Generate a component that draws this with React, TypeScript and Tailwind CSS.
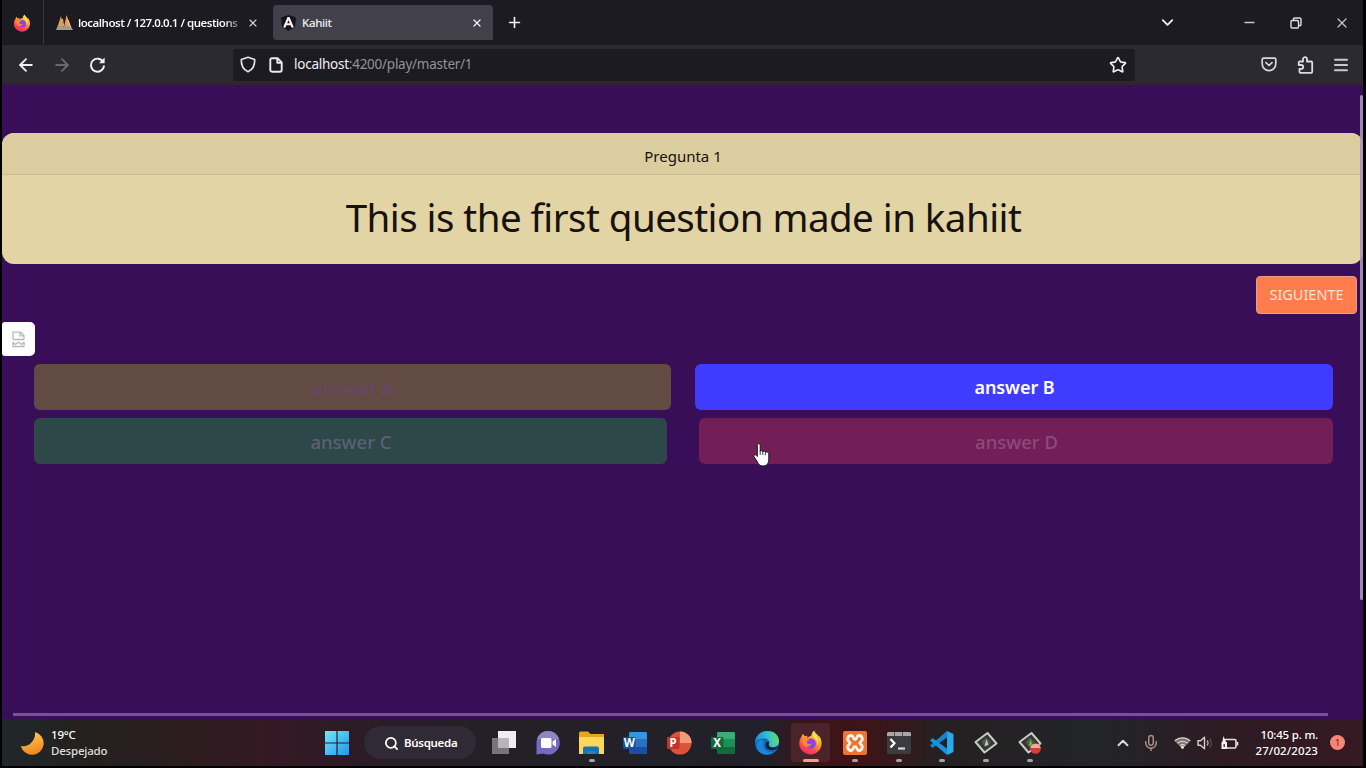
import React from 'react';
import { ArrowLeft, ArrowRight, ChevronDown, ChevronUp, Menu, Mic, Minus, Plus, Search, Star, X } from 'lucide-react';

const FirefoxIcon = ({ size }: { size: number }) => (
  <svg width={size} height={size} viewBox="0 0 24 24">
    <defs>
      <linearGradient id="fx" x1="0.8" y1="0" x2="0.3" y2="1">
        <stop offset="0" stopColor="#fff05a" />
        <stop offset="0.4" stopColor="#ffa52c" />
        <stop offset="0.75" stopColor="#ff4a48" />
        <stop offset="1" stopColor="#e8266e" />
      </linearGradient>
    </defs>
    <path d="M3 7 4.5 3.5 6.5 6 9 5.5 8.8 8C10 6 12 6 13 5c.3-2 1-3.500 2.500-4.500C16 3 19 4 20 6.500l.2-1C22 8 23 11 22.600 14 22 19.500 17.500 23.500 12 23.500S1.200 19 1.200 13C1.200 10.500 2 8.500 3 7Z" fill="url(#fx)" />
    <circle cx="12.200" cy="13" r="5" fill="#8a45e8" />
    <path d="M5 9c2-1.500 4.500-1 6 .8-2 .2-3 1.200-2.600 2.500.6 1.600 2.600 1.600 4.600.7-1 3-5 4-7.200 2C4.500 13.500 4 11 5 9Z" fill="#ff8a2c" />
    <path d="M15 3c4 3 6 7 4 12 0-3-1-6-4-7.500-1-1.500-.8-3 0-4.500Z" fill="#ffdc4a" />
  </svg>
);

const Pma = () => (
  <svg width="17" height="16" viewBox="0 0 17 16">
    <path d="M1.500 12 5 1l2.500 11Z" fill="#e9a143" />
    <path d="M8 12 10.500 0l4.500 12Z" fill="#f0a03c" />
    <path d="M0 15 2.500 9l2 3 1.500-3 2 3.500L10 9l2 3.500L13.500 9 17 15Z" fill="#a39c95" />
    <path d="M6.500 4 7.500 11M12 5l2.500 7" stroke="#ddd0bd" strokeWidth="1" />
  </svg>
);

const AngularIcon = () => (
  <svg width="15" height="16" viewBox="0 0 15 16">
    <path d="M7.500 0 15 2.500 14 12l-6.500 4L1 12 0 2.500Z" fill="#15141b" />
    <path d="M7.500 2.500 3.200 12.500M7.500 2.500l4.300 10M5 9.300h5" stroke="#f5f5f7" strokeWidth="2.100" fill="none" />
  </svg>
);

const Reload = () => (
  <svg width="17" height="17" viewBox="0 0 17 17" fill="none" stroke="#f0eff4" strokeWidth="1.900">
    <path d="M14.300 6.200A6.500 6.500 0 1 0 15 9.500" />
    <path d="M15.600 1.500v5.700H10Z" fill="#f0eff4" stroke="none" />
  </svg>
);

const ShieldIcon = () => (
  <svg width="16" height="17" viewBox="0 0 16 17" fill="none" stroke="#e4e3e9" strokeWidth="1.700" strokeLinejoin="round">
    <path d="M8 1.200 14.700 3.500c.2 5-1.200 9.700-6.700 12.300C2.500 13.200 1.100 8.500 1.300 3.500Z" />
  </svg>
);

const PageIcon = () => (
  <svg width="14" height="16" viewBox="0 0 14 16" fill="none" stroke="#ebeaf0" strokeWidth="1.900" strokeLinejoin="round">
    <path d="M3 1.200h5.500l4.200 4.200V13a1.700 1.700 0 0 1-1.700 1.700H3A1.700 1.700 0 0 1 1.300 13V2.900A1.700 1.700 0 0 1 3 1.200Z" />
    <path d="M8.300 1.500v4.300h4.200" />
  </svg>
);

const Pocket = () => (
  <svg width="16" height="15" viewBox="0 0 16 15" fill="none" stroke="#d8d6de" strokeWidth="1.700" strokeLinecap="round" strokeLinejoin="round">
    <path d="M2.500 1.200h11a1.300 1.300 0 0 1 1.300 1.300v4.300a6.800 6.800 0 0 1-13.600 0V2.500a1.300 1.300 0 0 1 1.300-1.300Z" />
    <path d="m5 5.700 3 2.800 3-2.800" />
  </svg>
);

const Puzzle = () => (
  <svg width="17" height="18" viewBox="0 0 17 18" fill="none" stroke="#dddbe3" strokeWidth="1.800" strokeLinejoin="round">
    <path d="M3 5.500h3V3.200a2 2 0 0 1 4 0v2.300h4.200a1 1 0 0 1 1 1v9.300a1 1 0 0 1-1 1H3.500a1 1 0 0 1-1-1v-3h1.800a1.900 1.900 0 0 0 0-3.800H1.700V6.500A1 1 0 0 1 3 5.500Z" />
  </svg>
);

const Restore = () => (
  <svg width="12" height="12" viewBox="0 0 12 12" fill="none" stroke="#dedde3" strokeWidth="1.400">
    <rect x="1" y="3.500" width="7.500" height="7.500" rx="1" />
    <path d="M3.500 3V1.800A.8.8 0 0 1 4.300 1h5.400A1.300 1.300 0 0 1 11 2.300v5.400a.8.8 0 0 1-.8.8H9" />
  </svg>
);

const BrokenPage = () => (
  <svg width="15" height="17" viewBox="0 0 15 17" fill="none" stroke="#b9b9b9" strokeWidth="1.300">
    <path d="M2 8.500V1.200h7.500L13 4.500v4M9 1.500v3.300h4M2 8.500h11M1.500 15.500h12M2 11v4M13 11v4M1.500 11l3 2.500L7.500 11l3 2.500 3-2.500" />
  </svg>
);

const Moon = () => (
  <svg width="24" height="24" viewBox="0 0 24 24">
    <defs>
      <linearGradient id="mn" x1="0" y1="0" x2="0.3" y2="1">
        <stop offset="0" stopColor="#ffd257" />
        <stop offset="1" stopColor="#f18a22" />
      </linearGradient>
    </defs>
    <path d="M15 1A11.600 11.600 0 1 1 .8 15C8 17 16 10 15 1Z" fill="url(#mn)" />
  </svg>
);

const WindowsIcon = () => (
  <svg width="24" height="24" viewBox="0 0 24 24">
    <defs>
      <linearGradient id="wn" x1="0" y1="0" x2="1" y2="1">
        <stop offset="0" stopColor="#72e6fb" />
        <stop offset="1" stopColor="#1d97ed" />
      </linearGradient>
    </defs>
    <path d="M0 0h11.400v11.400H0ZM12.600 0H24v11.400H12.600ZM0 12.600h11.400V24H0ZM12.600 12.600H24V24H12.600Z" fill="url(#wn)" />
  </svg>
);

const TaskView = () => (
  <svg width="26" height="24" viewBox="0 0 26 24">
    <rect x="7" y="0" width="18" height="17" fill="#efedf3" />
    <rect x="1" y="7" width="17" height="16" fill="#77747a" />
    <rect x="7" y="7" width="11" height="10" fill="#b7b5bb" />
  </svg>
);

const Chat = () => (
  <svg width="24" height="24" viewBox="0 0 24 24">
    <path d="M12 0a11.800 11.800 0 1 1-5 22.500L.5 23.500V12A12 12 0 0 1 12 0Z" fill="#7469c4" />
    <path d="M12 0A11.800 11.800 0 0 1 23 8L1 8A12 12 0 0 1 12 0Z" fill="#8d88bd" />
    <rect x="5" y="7" width="10.500" height="10" rx="1.500" fill="#fff" />
    <path d="m16.500 10.500 3.500-2.500v8l-3.500-2.500Z" fill="#fff" />
  </svg>
);

const Explorer = () => (
  <svg width="26" height="24" viewBox="0 0 26 24">
    <path d="M0 2a1.500 1.500 0 0 1 1.500-1.500H9L11.500 3H25v18H0Z" fill="#e2a61f" />
    <path d="M0 6h25v17H0Z" fill="#ffd65c" />
    <path d="M4 23v-5.500a2 2 0 0 1 2-2h12a2 2 0 0 1 2 2V23Z" fill="#1673b5" />
    <path d="M8 20h8v3H8Z" fill="#2a80b8" />
  </svg>
);

const OfficeIcon = ({ letter, light, mid, dark, round }: { letter: string; light: string; mid: string; dark: string; round?: boolean }) => (
  <svg width="26" height="24" viewBox="0 0 26 24">
    {round ? (
      <>
        <circle cx="14" cy="12" r="11.500" fill={mid} />
        <path d="M14 .5A11.500 11.500 0 0 1 25.500 12H14Z" fill={light} />
      </>
    ) : (
      <>
        <rect x="7" y="1" width="18" height="22" rx="1.500" fill={mid} />
        <path d="M8.500 1h15A1.500 1.500 0 0 1 25 2.500V8H7V2.500A1.500 1.500 0 0 1 8.500 1Z" fill={light} />
        <path d="M7 16h18v5.500a1.500 1.500 0 0 1-1.500 1.500h-15A1.500 1.500 0 0 1 7 21.500Z" fill={dark} />
      </>
    )}
    <rect x="1" y="6" width="12.500" height="12" rx="1.200" fill={dark} />
    <text x="7.200" y="16.300" textAnchor="middle" fontSize="11.500" fontWeight="700" fill="#fff" fontFamily="Noto Sans, sans-serif">{letter}</text>
  </svg>
);

const Edge = () => (
  <svg width="26" height="26" viewBox="0 0 26 26">
    <defs>
      <linearGradient id="ed" x1="0" y1="0.500" x2="1" y2="0.400">
        <stop offset="0" stopColor="#168ddb" />
        <stop offset="0.500" stopColor="#2fbbd4" />
        <stop offset="1" stopColor="#67dc72" />
      </linearGradient>
    </defs>
    <circle cx="13" cy="13" r="12" fill="#1268b8" />
    <path d="M1 13C1.500 5.500 7 1 13.500 1 21 1 25 6 25 11c0 4-3 6-6 6-3.500 0-5-1.500-4-3.500 1-3.500-2-5.500-5-5C5 9 2 10 1 13Z" fill="url(#ed)" />
    <path d="M10 11c-3 6 1.500 12 9 11-6 5-16 2-16.500-7C3 11 6 9 10 11Z" fill="#1987d8" />
    <path d="M15.500 12c-1.500 2-1 5 2.500 5.500 3 .4 5-.5 6.500-1.500-1 2.500-3 4-5 4-5 .5-8-2-8-4.500s1-4.500 4-3.500Z" fill="#14213a" />
  </svg>
);

const Xampp = () => (
  <svg width="24" height="24" viewBox="0 0 24 24">
    <rect width="24" height="24" rx="2" fill="#ee7431" />
    <path d="M8 4.500c3 0 1.500 4 4 4s1-4 4-4 4.500 4 2 6c-1.500 1.300-1.500 1.700 0 3 2.500 2 1 6-2 6s-1.500-4-4-4-1 4-4 4-4.500-4-2-6c1.500-1.300 1.500-1.700 0-3-2.500-2-1-6 2-6Z" fill="none" stroke="#fff4ea" strokeWidth="2.800" />
  </svg>
);

const Terminal = () => (
  <svg width="24" height="24" viewBox="0 0 24 24">
    <rect y="1" width="24" height="22" rx="1.500" fill="#3c3b3d" />
    <path d="M0 2.500A1.500 1.500 0 0 1 1.500 1h21A1.500 1.500 0 0 1 24 2.500V5H0Z" fill="#aaa6aa" />
    <path d="M7 1h1v4H7ZM15 1h1v4h-1Z" fill="#59565b" />
    <path d="m3.500 8 4 4.300-4 4.300" stroke="#fff" strokeWidth="2.200" fill="none" />
    <path d="M11 17.500h7" stroke="#d9d9d9" strokeWidth="2.200" />
  </svg>
);

const VsCode = () => (
  <svg width="24" height="24" viewBox="0 0 24 24">
    <path d="m17 0 6.500 3v18L17 24Z" fill="#2ca8ed" />
    <path d="M17 0 0 14.500 2.500 17 17.500 6Z" fill="#1584cb" />
    <path d="M17 24 0 9.500 2.500 7l15 11Z" fill="#1b91dc" />
  </svg>
);

const Diamond = ({ rec }: { rec?: boolean }) => (
  <svg width="24" height="24" viewBox="0 0 24 24">
    <path d="M13.500 2 22.500 12.500 10.500 21.500 1.500 11Z" fill="#343834" stroke="#c9cac7" strokeWidth="2" strokeLinejoin="round" />
    <path d="m12 6.500 5 5-5.500 5-4-5.500Z" fill="#50584c" />
    <path d="m12.500 8 2 6-4 1Z" fill={rec ? '#5eba45' : '#c4c7bf'} />
    {rec && (
      <>
        <circle cx="17.500" cy="17.500" r="5.300" fill="#d83d38" />
        <path d="M12.300 17a5.300 5.300 0 0 1 10.400 0Z" fill="#efaaa2" />
      </>
    )}
  </svg>
);

const Wifi = () => (
  <svg width="17" height="13" viewBox="0 0 17 13" fill="none">
    <path d="M0 4.500a12.500 12.500 0 0 1 17 0L8.500 13Z" fill="#77716f" />
    <path d="M1 4.800a11 11 0 0 1 15 0M3.500 7.300a7.400 7.400 0 0 1 10 0M6 9.700a3.600 3.600 0 0 1 5 0" stroke="#d2cac7" strokeWidth="1.200" />
    <circle cx="8.500" cy="11.400" r="1.300" fill="#fff" />
  </svg>
);

const Speaker = () => (
  <svg width="16" height="14" viewBox="0 0 16 14" fill="none" strokeLinejoin="round">
    <path d="M1 4.800h2.500L7.500 1.300v11.400L3.500 9.200H1Z" stroke="#d6d1d0" strokeWidth="1.400" />
    <path d="M10 4.500a3.500 3.500 0 0 1 0 5" stroke="#bbb5b4" strokeWidth="1.300" />
    <path d="M12.500 2.500a6.500 6.500 0 0 1 0 9" stroke="#55504f" strokeWidth="1.200" />
  </svg>
);

const BatteryIcon = () => (
  <svg width="18" height="14" viewBox="0 0 18 14" fill="none">
    <rect x="3" y="3.500" width="12" height="8.500" rx="1.500" stroke="#e8e1e0" strokeWidth="1.600" />
    <path d="M16.500 6v3.500" stroke="#e8e1e0" strokeWidth="1.600" />
    <path d="M.5 6h5.500v7H.5ZM1.300 6l1.200-6L5 6Z" fill="#f5eeee" />
    <path d="M3.200 8v3" stroke="#2e1b22" strokeWidth="1.200" />
  </svg>
);

const Hand = () => (
  <svg width="18" height="25" viewBox="0 0 18 25">
    <path d="M4.300 2.300c0-2 2.900-2 2.900 0v6.200c.3-1.300 2.500-1.100 2.600.3.500-1.100 2.400-.8 2.600.6.700-.9 3.300-.5 3.400 1.200v6.200c0 3.600-2.300 6.200-5.700 6.200-3.400 0-4.300-1.500-5.700-4L1.200 14c-1-1.800 1.200-3 2.400-1.500l.7 1Z" fill="#fff" stroke="#171020" strokeWidth="1" />
    <path d="M7.200 8.500v3.500M9.800 9v3M12.400 9.800v2.500" stroke="#171020" strokeWidth=".8" />
  </svg>
);

const taskItems = [
  { icon: <TaskView /> },
  { icon: <Chat /> },
  { icon: <Explorer />, open: true },
  { icon: <OfficeIcon letter="W" light="#3595df" mid="#2672c8" dark="#194fa3" /> },
  { icon: <OfficeIcon letter="P" light="#f39a79" mid="#dc5438" dark="#bf3529" round /> },
  { icon: <OfficeIcon letter="X" light="#36ae76" mid="#1b9158" dark="#11693c" /> },
  { icon: <Edge /> },
  { icon: <FirefoxIcon size={25} />, open: true, active: true },
  { icon: <Xampp />, open: true },
  { icon: <Terminal />, open: true },
  { icon: <VsCode />, open: true },
  { icon: <Diamond />, open: true },
  { icon: <Diamond rec />, open: true },
];

const answers = [
  { text: 'answer A', box: 'w-[637px] bg-[#624b43] text-[#6b4568] font-medium text-[18.500px]' },
  { text: 'answer B', box: 'w-[638px] bg-[#403cff] text-white font-semibold text-[18px] tracking-[-0.100px]' },
  { text: 'answer C', box: 'w-[633px] bg-[#2e4748] text-[#5a6274] font-medium text-[18.500px]' },
  { text: 'answer D', box: 'w-[634px] bg-[#741e57] text-[#8b4b7b] font-medium text-[18.500px]' },
];

const Answer = ({ text, box }: { text: string; box: string }) => (
  <div className={`flex h-[46px] items-center justify-center rounded-md pt-px pl-px ${box}`}>
    <span>{text}</span>
  </div>
);

export default function App() {
  return (
    <div className="relative flex h-[768px] w-[1366px] flex-col overflow-hidden bg-black pr-[3px] pl-[2px] font-['Noto_Sans',sans-serif]">
      <header className="flex h-[45px] shrink-0 items-center bg-[#1c1b22] text-[#f2f1f6]">
        <div className="flex w-[39px] justify-center"><FirefoxIcon size={18} /></div>
        <div className="ml-[2px] h-full w-px bg-[#36353e]" />
        <div className="flex h-full w-[220px] items-center pl-[12px]">
          <Pma />
          <span className="ml-[5px] w-[166px] bg-gradient-to-r from-white from-88% to-[#3a3941] bg-clip-text text-[11.500px] font-semibold tracking-[-0.500px] whitespace-nowrap text-transparent">localhost / 127.0.0.1 / questions</span>
          <X size={12} strokeWidth={2.300} className="ml-[3px] text-[#d4d3da]" />
        </div>
        <div className="ml-[9px] flex h-[35px] w-[220px] items-center rounded-t-[4px] rounded-bl-[4px] bg-[#42414b] pl-[8px]">
          <AngularIcon />
          <span className="ml-[6px] text-[11.500px] font-medium tracking-[-0.350px]">Kahiit</span>
          <X size={12} strokeWidth={2.600} className="mr-[10px] ml-auto" />
        </div>
        <Plus size={17} strokeWidth={2.300} className="ml-[13px]" />
        <div className="ml-auto flex items-center">
          <ChevronDown size={19} strokeWidth={2.300} className="mr-[65px]" />
          <Minus size={15} strokeWidth={2.600} className="mr-[33px] text-[#c7c6cd]" />
          <span className="mr-[32px]"><Restore /></span>
          <X size={16} strokeWidth={1.800} className="mr-[13px] text-[#c7c6cd]" />
        </div>
      </header>

      <nav className="flex h-[40px] shrink-0 items-center border-b-2 border-[#34203c] bg-[#2b2a33] pt-px text-[#efeef4]">
        <ArrowLeft size={20} strokeWidth={2.200} className="ml-[14px]" />
        <ArrowRight size={20} strokeWidth={2.200} className="ml-4 text-[#6a6972]" />
        <span className="ml-[17px]"><Reload /></span>
        <div className="ml-[127px] flex h-[32px] w-[902px] items-center rounded-[3px] bg-[#1c1b22] pl-[7px]">
          <ShieldIcon />
          <span className="ml-[13px]"><PageIcon /></span>
          <span className="ml-[11px] text-[13.500px] tracking-[-0.250px] text-[#92919a]"><span className="text-[#f0eff4]">localhost</span>:4200/play/master/1</span>
          <Star size={18} strokeWidth={2.200} className="mr-[8px] ml-auto" />
        </div>
        <span className="ml-[126px]"><Pocket /></span>
        <span className="ml-[20px]"><Puzzle /></span>
        <Menu size={18} strokeWidth={2.600} className="ml-[18px] text-[#c9c8cf]" />
      </nav>

      <main className="relative flex h-[634px] shrink-0 flex-col overflow-hidden bg-[#380e59]">
        <section className="mt-[48px] flex h-[131px] shrink-0 flex-col overflow-hidden rounded-[12px] bg-[#e2d4a4] text-center text-[#17120e]">
          <div className="flex h-[42px] items-center justify-center border-b border-[#cabb90] bg-[#dccda0] pt-[5px] pl-px text-[15px]"><span>Pregunta 1</span></div>
          <h1 className="flex flex-1 items-center justify-center pb-1 pl-[2px] text-[38.500px] leading-none tracking-[-0.540px]"><span>This is the first question made in kahiit</span></h1>
        </section>
        <div className="mt-3 flex shrink-0 justify-end pr-[6px]">
          <button className="flex h-[38px] w-[101px] items-center justify-center rounded-[4px] border border-[#e3a08d] bg-[#ff7c4d] text-[14.500px] text-[#ffe5d2]">SIGUIENTE</button>
        </div>
        <div className="mt-2 flex h-[34px] w-[33px] shrink-0 items-center justify-center rounded-r-[5px] rounded-l-[3px] bg-white"><BrokenPage /></div>
        <div className="mt-[8px] flex w-[1331px] shrink-0 flex-col gap-2 pl-8">
          <div className="flex justify-between"><Answer {...answers[0]} /><Answer {...answers[1]} /></div>
          <div className="flex justify-between"><Answer {...answers[2]} /><Answer {...answers[3]} /></div>
        </div>
        <div className="mt-auto mb-[3px] ml-[11px] h-[3px] w-[1315px] shrink-0 bg-[#7b5190]" />
        <div className="absolute top-[10px] right-0 h-[505px] w-[3px] rounded bg-[#a994ba]/90" />
        <div className="absolute top-[358px] left-[751px]"><Hand /></div>
      </main>

      <footer className="flex h-[47px] shrink-0 items-center bg-[linear-gradient(90deg,#20272b_0px,#24211f_80px,#2c1c20_190px,#341923_270px,#2c1b27_350px,#242027_480px,#21202a_760px,#3d1318_820px,#3b1517_870px,#252022_940px,#222426_1100px,#2e1b22_1230px,#351923_1361px)] text-white">
        <div className="flex w-[323px] items-center pl-[18px]">
          <Moon />
          <div className="ml-[7px] text-[11.500px] leading-4 font-medium tracking-[-0.200px]"><div>19°C</div><div className="text-[#dfdddd]">Despejado</div></div>
        </div>
        <WindowsIcon />
        <div className="ml-[15px] flex h-[33px] w-[112px] items-center rounded-full bg-[#302a36] pt-px pl-[20px]">
          <Search size={15} strokeWidth={2.800} />
          <span className="ml-[5px] text-[11.500px] font-semibold tracking-[-0.300px]">Búsqueda</span>
        </div>
        <div className="ml-[6px] grid h-full w-[570px] grid-cols-13">
          {taskItems.map((item, i) => (
            <div key={i} className="flex flex-col items-center pt-1">
              <div className={`flex h-[39px] w-[39px] items-center justify-center rounded-[3px] ${item.active ? 'bg-[#492529]' : ''}`}>{item.icon}</div>
              <div className={`-mt-[3px] h-[3px] rounded-full ${item.active ? 'w-4 bg-[#f1a092]' : item.open ? 'w-[6px] bg-[#a7a2a5]' : 'w-0'}`} />
            </div>
          ))}
        </div>
        <ChevronUp size={18} strokeWidth={2.500} className="ml-[62px] text-[#dedcdc]" />
        <Mic size={18} strokeWidth={2} className="ml-[10px] text-[#aa8d83]" />
        <span className="ml-[14px]"><Wifi /></span>
        <span className="ml-[6px]"><Speaker /></span>
        <span className="ml-[8px]"><BatteryIcon /></span>
        <div className="ml-auto text-right text-[11.500px] leading-4 font-medium tracking-[-0.200px] whitespace-nowrap"><div>10:45 p. m.</div><div className="tracking-[0.100px]">27/02/2023</div></div>
        <div className="mr-[18px] ml-[12px] flex h-[15px] w-[15px] items-center justify-center rounded-full bg-[#fa8575] text-[9px] text-[#4c1c1c]">1</div>
      </footer>
    </div>
  );
}
